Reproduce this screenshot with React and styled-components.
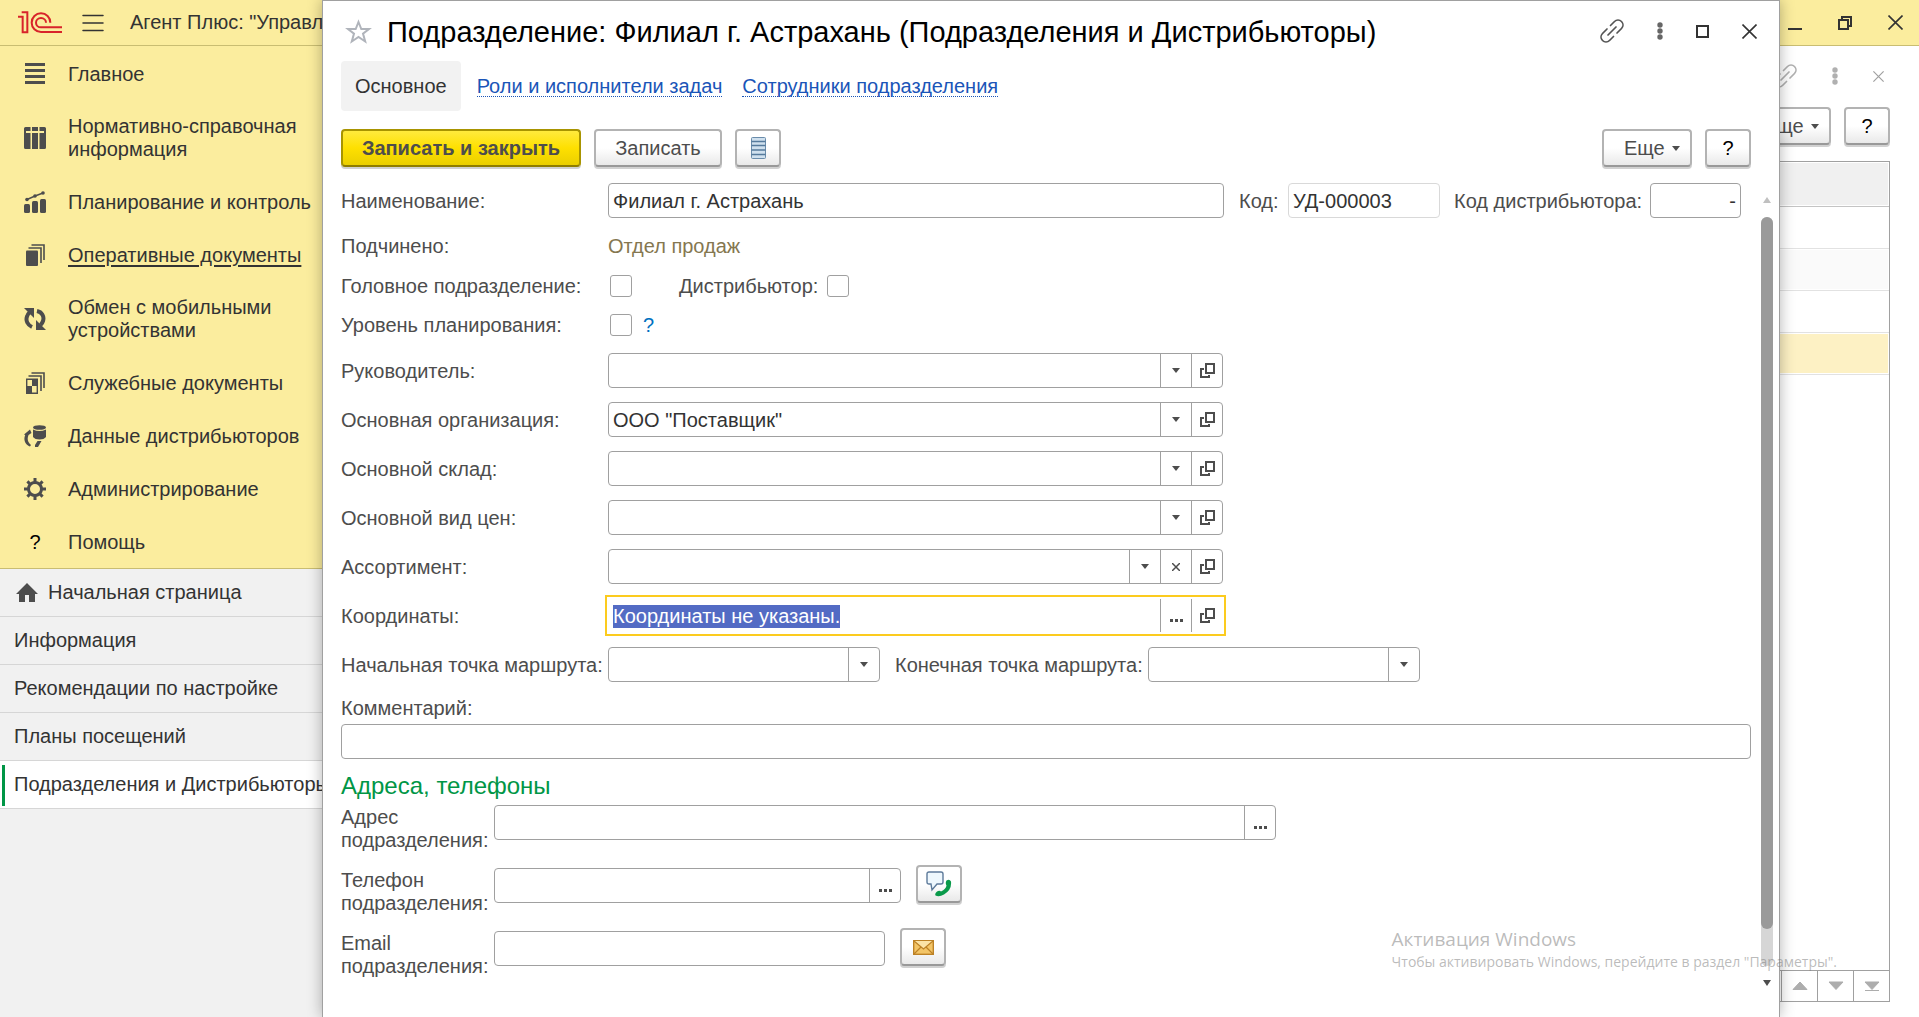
import React, { useEffect, useRef } from "react";
import styled, { createGlobalStyle, css } from "styled-components";

const GlobalStyle = createGlobalStyle`
  * { box-sizing: border-box; }
  html, body { margin: 0; height: 100%; overflow: hidden; background: #fff; }
  body, button, input, select {
    font-family: "Liberation Sans", Arial, sans-serif;
    font-size: 20px;
    line-height: 23px;
    color: #4d4d4d;
  }
  button { padding: 0; cursor: pointer; }
  svg { display: block; flex: none; }
`;

/* ---------- application shell ---------- */

const Shell = styled.div`
  display: flex;
  flex-direction: column;
  height: 100vh;
`;

const AppHeader = styled.header`
  display: flex;
  align-items: center;
  height: 46px;
  flex: none;
  padding: 0 16px 0 18px;
  background: #fbed9e;
  border-bottom: 1px solid #c9bd72;
  color: #333;
`;

const AppTitle = styled.span`
  flex: 1;
  white-space: nowrap;
`;

const PlainButton = styled.button`
  display: flex;
  align-items: center;
  justify-content: center;
  border: 0;
  background: none;
  color: ${(p) => p.$color || "#333"};
`;

const MenuButton = styled(PlainButton)`
  margin: 0 26px 0 20px;
`;

const WindowButtons = styled.div`
  display: flex;
  gap: 36px;
`;

const Workspace = styled.div`
  display: flex;
  flex: 1;
  min-height: 0;
`;

const Sidebar = styled.nav`
  display: flex;
  flex-direction: column;
  width: 340px;
  flex: none;
  background: #f1f1f1;
`;

const Sections = styled.div`
  padding-top: 1px;
  background: #fbed9e;
  border-bottom: 1px solid #c9bd72;
`;

const Section = styled.a`
  display: grid;
  grid-template-columns: 22px 200px;
  align-items: center;
  gap: 22px;
  min-height: 53px;
  padding: 15px 24px 14px;
  color: #333;
  text-decoration: ${(p) => (p.$active ? "underline" : "none")};
  text-underline-offset: 3px;
  white-space: pre;
`;

const HelpMark = styled.span`
  text-align: center;
  color: #000;
`;

const OpenTab = styled.a`
  display: flex;
  align-items: center;
  gap: 10px;
  height: 48px;
  padding-left: ${(p) => (p.$home ? "16px" : "14px")};
  border-bottom: 1px solid #d6d6d6;
  background: ${(p) =>
    p.$active
      ? "linear-gradient(#009646, #009646) 2px 4px / 3px 41px no-repeat #fff"
      : "none"};
  color: #333;
  text-decoration: none;
  white-space: nowrap;
`;

/* ---------- list window behind the dialog ---------- */

const ListWindow = styled.main`
  display: flex;
  flex-direction: column;
  align-items: flex-end;
  flex: 1;
  padding: 18px 29px 15px 20px;
  background: #fff;
`;

const ListTools = styled.div`
  display: flex;
  align-items: center;
  gap: 35px;
  padding-right: 6px;
  margin-bottom: 19px;
`;

const ListCommands = styled.div`
  display: flex;
  gap: 13px;
  margin-bottom: 16px;
`;

const ListFrame = styled.div`
  display: flex;
  flex-direction: column;
  width: 100%;
  flex: 1;
  border: 1px solid #a0a0a0;
`;

const ListTable = styled.table`
  width: 100%;
  border-collapse: collapse;
`;

const HeadCell = styled.th`
  height: 44px;
  padding: 0;
  background: #f0f0f0;
  border-bottom: 1px solid #c4c4c4;
  box-shadow: inset 0 0 0 1px #fff;
`;

const ListCell = styled.td`
  height: 42px;
  padding: 0;
  border-bottom: 1px solid #e2e2e2;
  background: ${(p) =>
    p.$kind === "selected" ? "#fdf1c4" : p.$kind === "even" ? "#fafafa" : "#fff"};
  box-shadow: inset 0 0 0 1px #fff;
`;

const Pager = styled.div`
  display: flex;
  justify-content: flex-end;
  margin-top: auto;
  border-top: 1px solid #a0a0a0;
`;

const PagerButton = styled(PlainButton)`
  width: 36px;
  height: 30px;
  border-left: 1px solid #a0a0a0;
`;

/* ---------- dialog ---------- */

const Dialog = styled.section`
  position: absolute;
  top: 0;
  bottom: 0;
  left: 322px;
  right: 139px;
  display: flex;
  flex-direction: column;
  background: #fff;
  border: 1px solid #a0a0a0;
  border-bottom: 0;
  box-shadow: 0 0 14px rgba(0, 0, 0, 0.3);
`;

const DialogHeader = styled.header`
  display: flex;
  align-items: center;
  gap: 15px;
  height: 60px;
  padding: 0 22px;
`;

const DialogTitle = styled.h1`
  flex: 1;
  margin: 0;
  padding-top: 2px;
  font-size: 29px;
  line-height: 32px;
  font-weight: 400;
  color: #000;
  white-space: nowrap;
`;

const DialogTools = styled.div`
  display: flex;
  align-items: center;
  gap: 33px;
`;

const Tabs = styled.nav`
  display: flex;
  align-items: center;
  padding: 0 28px 0 18px;
`;

const CurrentTab = styled.span`
  padding: 14px 14px 13px;
  margin-right: 16px;
  border-radius: 4px;
  background: #f2f2f2;
  color: #333;
`;

const TabLink = styled.a`
  margin-right: 20px;
  line-height: 20px;
  color: #1a55b8;
  text-decoration: none;
  border-bottom: 1px dotted #1a55b8;
`;

const Commands = styled.div`
  display: flex;
  gap: 13px;
  padding: 18px 28px 16px 18px;
`;

const Spacer = styled.span`
  flex: 1;
`;

const Button = styled.button`
  display: flex;
  align-items: center;
  justify-content: center;
  height: 38px;
  flex: none;
  width: ${(p) => p.$width || "auto"};
  border: 2px solid #b3b3b3;
  border-bottom-color: #999;
  border-radius: 4px;
  background: linear-gradient(#fff 50%, #e9e9e9);
  box-shadow: 0 2px 0 rgba(0, 0, 0, 0.18);
  white-space: nowrap;
  ${(p) =>
    p.$primary &&
    css`
      border-color: #a89400;
      border-bottom-color: #8f7d00;
      background: linear-gradient(#ffea3d, #fee000 50%, #ebcf00);
      font-weight: 700;
    `}
`;

const MoreButton = styled(Button)`
  justify-content: space-between;
  width: 90px;
  padding: 0 10px 0 20px;
`;

const IconButton = styled(Button)`
  width: 46px;
  color: #000;
`;

const DialogBody = styled.div`
  display: flex;
  flex: 1;
  min-height: 0;
  gap: 10px;
  padding: 0 6px 17px 18px;
`;

const Form = styled.form`
  flex: 1;
  min-width: 0;
`;

const Stack = styled.div`
  display: flex;
  flex-direction: column;
  gap: ${(p) => p.$gap};
  padding: ${(p) => p.$padding || 0};
`;

const Row = styled.div`
  display: flex;
  align-items: center;
`;

const CheckRow = styled(Row)`
  height: 22px;
`;

const Label = styled.label`
  flex: none;
  width: ${(p) => p.$width || "auto"};
  padding-top: 1px;
  padding-left: ${(p) => p.$indent || 0};
  white-space: nowrap;
`;

const Reference = styled.span`
  color: #857750;
`;

const FieldBox = styled.div`
  display: flex;
  width: ${(p) => p.$width || "100%"};
  height: 35px;
  flex: none;
  border: 1px solid ${(p) => (p.$focused ? "transparent" : p.$muted ? "#d9d9d9" : "#a0a0a0")};
  border-radius: ${(p) => (p.$focused ? 0 : "4px")};
  background: #fff;
  ${(p) =>
    p.$focused &&
    css`
      outline: 2px solid #fccb1e;
      outline-offset: 1px;
    `}
`;

const controlStyle = css`
  flex: 1;
  min-width: 0;
  padding: 1px 4px 0;
  border: 0;
  outline: 0;
  background: none;
  color: #333;
`;

const Input = styled.input`
  ${controlStyle}
  text-align: ${(p) => (p.$right ? "right" : "left")};
  &::selection {
    background: #536bc4;
    color: #fff;
  }
`;

const Select = styled.select`
  ${controlStyle}
  appearance: none;
`;

const FieldButton = styled(PlainButton)`
  width: 31px;
  border-left: 1px solid #a0a0a0;
`;

const SelectMark = styled.span`
  display: flex;
  align-items: center;
  justify-content: center;
  width: 31px;
  border-left: 1px solid #a0a0a0;
  pointer-events: none;
`;

const Checkbox = styled.input`
  appearance: none;
  width: 22px;
  height: 22px;
  margin: 0 0 0 2px;
  border: 1px solid #a0a0a0;
  border-radius: 3px;
  background: #fff;
`;

const Hint = styled.a`
  margin-left: 11px;
  color: #0070c0;
  text-decoration: none;
`;

const GroupTitle = styled.h2`
  margin: 13px 0 5px;
  font-size: 24px;
  line-height: 28px;
  font-weight: 400;
  color: #009646;
`;

const ContactRow = styled.div`
  display: flex;
  align-items: flex-start;
  height: 46px;
`;

const ContactLabel = styled.label`
  width: 153px;
  flex: none;
  padding-top: 1px;
`;

const ContactField = styled.div`
  display: flex;
  align-items: flex-end;
  gap: 15px;
  margin-top: ${(p) => (p.$withButton ? "-3px" : 0)};
`;

const ScrollBar = styled.div`
  display: flex;
  flex-direction: column;
  align-items: center;
  width: 12px;
`;

const ScrollArrow = styled(PlainButton)`
  height: 34px;
  flex: none;
`;

const ScrollTrack = styled.div`
  flex: 1;
  width: 12px;
  border-radius: 6px;
  background: #d6d6d6;
`;

const ScrollThumb = styled.div`
  height: 95%;
  border-radius: 6px;
  background: #9a9a9a;
`;

const Watermark = styled.aside`
  position: absolute;
  right: 82px;
  bottom: 45px;
  font-family: "Open Sans", "Noto Sans", sans-serif;
  font-size: 14px;
  line-height: 21px;
  color: rgba(120, 120, 120, 0.5);
  pointer-events: none;
  white-space: nowrap;
`;

const WatermarkTitle = styled.div`
  font-size: 19px;
  line-height: 24px;
`;

/* ---------- icons ---------- */

const Logo = () => (
  <svg width="44" height="23" viewBox="54 32 132 69" fill="none" stroke="#d8232a" strokeWidth="6">
    <path d="M54 49H68V96H82V36H65M123 95H186M123 81H186" />
    <path d="M151 67A28 28 0 1 0 123 95" />
    <path d="M138 67A15 14 0 1 0 123 81" />
  </svg>
);

const HamburgerIcon = () => (
  <svg width="22" height="18" viewBox="0 0 22 18" stroke="#333" strokeWidth="1.5" strokeLinecap="round">
    <path d="M1 1.5H21M1 9H21M1 16.5H21" />
  </svg>
);

const Icon22 = ({ children }) => (
  <svg width="22" height="22" viewBox="0 0 22 22" fill="#4d4d4d">
    {children}
  </svg>
);

const MainIcon = () => (
  <Icon22>
    <path d="M1 0h20v3H1zM1 6h20v3H1zM1 12h20v3H1zM1 18h20v3H1z" />
  </Icon22>
);

const CatalogIcon = () => (
  <Icon22>
    <path d="M0 1.5Q0 0 1.500 0H6.500V4H0zM8 0H14V4H8zM15.500 0H20.500Q22 0 22 1.500V4H15.500zM0 6H6.500V22H1.500Q0 22 0 20.500zM8 6H14V22H8zM15.500 6H22V20.500Q22 22 20.500 22H15.500z" />
    <path d="M0 3H2V7H0zM20 3H22V7H20z" />
  </Icon22>
);

const PlanIcon = () => (
  <Icon22>
    <rect x="0" y="13" width="6" height="9" rx="1.500" />
    <rect x="8" y="10" width="6" height="12" rx="1.500" />
    <rect x="16" y="8" width="6" height="14" rx="1.500" />
    <circle cx="3" cy="8.500" r="1.800" />
    <circle cx="11" cy="5" r="1.800" />
    <circle cx="19" cy="2" r="1.800" />
    <path d="M3 8.500L11 5L19 2" fill="none" stroke="#4d4d4d" strokeWidth="1.400" />
  </Icon22>
);

const DocsIcon = () => (
  <Icon22>
    <rect x="2" y="6.500" width="12" height="15.500" rx="1" />
    <path d="M4.500 4H17V19M7.500 1H20V16" fill="none" stroke="#4d4d4d" strokeWidth="1.600" />
  </Icon22>
);

const ServiceDocsIcon = () => (
  <Icon22>
    <path d="M2.700 7.200H13.300V21.300H2.700z" fill="none" stroke="#4d4d4d" strokeWidth="1.400" />
    <path d="M8 7h5.500v7H8zM3 14h5v7.500H3z" />
    <path d="M4.500 4H17V19M7.500 1H20V16" fill="none" stroke="#4d4d4d" strokeWidth="1.600" />
  </Icon22>
);

const SyncIcon = () => (
  <Icon22>
    <path d="M8 19C3.500 17 1.500 12.500 3 8.500Q3.800 6 5.500 4.500" fill="none" stroke="#4d4d4d" strokeWidth="4" />
    <path d="M0 0H10V10z" />
    <path d="M13 3C18 4 20.500 8.500 19 13Q18.200 15.500 16.500 17" fill="none" stroke="#4d4d4d" strokeWidth="4" />
    <path d="M22 22H12V12z" />
  </Icon22>
);

const DistributorIcon = () => (
  <Icon22>
    <ellipse cx="15.500" cy="2.500" rx="6.500" ry="2.300" />
    <path d="M9 4.500Q15.500 7.500 22 4.500V12Q20 14.500 15.500 14.500T9 12z" />
    <path d="M6 21.500C1.500 20 -1 15 1.200 10L0 9.500L6 4.500L7.500 8L4.500 10C3 14 3.500 17 7 20z" />
    <path d="M11 20V22H14L17.500 16H13.500z" />
  </Icon22>
);

const GearIcon = () => (
  <Icon22>
    <circle cx="11" cy="11" r="6.500" fill="none" stroke="#4d4d4d" strokeWidth="3" />
    <path
      d="M11 0V4M11 18V22M0 11H4M18 11H22M3.400 3.400L6 6M16 16L18.600 18.600M18.600 3.400L16 6M6 16L3.400 18.600"
      stroke="#4d4d4d"
      strokeWidth="3"
    />
  </Icon22>
);

const HomeIcon = () => (
  <svg width="22" height="20" viewBox="0 0 22 20" fill="#4d4d4d">
    <path d="M11 0L22 11H19V19H13V12H9V19H3V11H0z" />
  </svg>
);

const StarIcon = () => (
  <svg width="27" height="25" viewBox="0 0 27 25" fill="none" stroke="#b0b4bb" strokeWidth="2">
    <path d="M13.500 3L16.300 10H24L18 14.600L20.200 22.500L13.500 18L6.800 22.500L9 14.600L3 10H10.700z" />
  </svg>
);

const LinkIcon = ({ color = "#555" }) => (
  <svg width="24" height="24" viewBox="0 0 24 24" fill="none" stroke={color} strokeWidth="1.700" strokeLinecap="round">
    <path d="M8 16L16 8" />
    <path d="M10.500 6.500L14.500 2.500A4.800 4.800 0 0 1 21.500 9.500L17 14" />
    <path d="M7 10L2.500 14.500A4.800 4.800 0 0 0 9.500 21.500L13.500 17.500" />
  </svg>
);

const DotsIcon = ({ color = "#666" }) => (
  <svg width="6" height="18" viewBox="0 0 6 18" fill={color}>
    <circle cx="3" cy="3" r="2.700" />
    <circle cx="3" cy="9" r="2.700" />
    <circle cx="3" cy="15" r="2.700" />
  </svg>
);

const MaximizeIcon = () => (
  <svg width="13" height="13" viewBox="0 0 13 13" fill="none" stroke="#333" strokeWidth="2">
    <path d="M1 1H12V12H1z" />
  </svg>
);

const CloseIcon = ({ size = 15, color = "#333" }) => (
  <svg width={size} height={size} viewBox="0 0 15 15" stroke={color} strokeWidth="1.600">
    <path d="M0.500 0.500L14.500 14.500M14.500 0.500L0.500 14.500" />
  </svg>
);

const MinimizeIcon = () => (
  <svg width="14" height="15" viewBox="0 0 14 15" fill="#333">
    <path d="M0 13h14v2H0z" />
  </svg>
);

const RestoreIcon = () => (
  <svg width="14" height="14" viewBox="0 0 14 14" fill="none" stroke="#333" strokeWidth="2">
    <path d="M1 4H10V13H1zM4 4V1H13V10H10" />
  </svg>
);

const CaretIcon = () => (
  <svg width="8" height="5" viewBox="0 0 8 5" fill="#4d4d4d">
    <path d="M0 0H8L4 5z" />
  </svg>
);

const OpenIcon = () => (
  <svg width="15" height="15" viewBox="0 0 15 15" fill="none" stroke="#4d4d4d" strokeWidth="2">
    <path d="M6 1H14V10H6zM4 6H1V14H9V12" />
  </svg>
);

const ClearIcon = () => (
  <svg width="8" height="8" viewBox="0 0 8 8" stroke="#4d4d4d" strokeWidth="1.500">
    <path d="M0 0L8 8M8 0L0 8" />
  </svg>
);

const EllipsisIcon = () => (
  <svg width="13" height="13" viewBox="0 0 13 13" fill="#4d4d4d">
    <path d="M0 10h3v3H0zM5 10h3v3H5zM10 10h3v3h-3z" />
  </svg>
);

const ListIcon = () => (
  <svg width="15" height="22" viewBox="0 0 15 22">
    <rect x="0.500" y="0.500" width="14" height="21" rx="1" fill="#cfe0ee" stroke="#6a8cab" />
    <path d="M0.500 4.500H14.500M0.500 8.500H14.500M0.500 13H14.500M0.500 17.500H14.500" stroke="#557a9c" strokeWidth="1.600" />
  </svg>
);

const CallIcon = () => (
  <svg width="26" height="26" viewBox="0 0 26 26">
    <path d="M3 1H15Q17 1 17 3V11Q17 13 15 13H11L6 19L5 13H3Q1 13 1 11V3Q1 1 3 1z" fill="#eef7fd" stroke="#5d7a9a" strokeWidth="1.400" />
    <path d="M20.500 9.500Q23.500 7.500 25 10.500Q26 19 18 23.500Q13 26.500 9.500 24.500Q8.500 22.500 11 20.500Q13.500 19 15 20.500Q20 18 20.500 14.500Q19 12 20.500 9.500z" fill="#0a9a4a" />
  </svg>
);

const MailIcon = () => (
  <svg width="21" height="15" viewBox="0 0 21 15">
    <rect x="0.700" y="0.700" width="19.600" height="13.600" fill="#f3c567" stroke="#bd8226" strokeWidth="1.400" />
    <path d="M1 1H20L10.500 9z" fill="#fbe3a6" />
    <path d="M1 1L10.500 9L20 1M1 14L8 7M20 14L13 7" fill="none" stroke="#bd8226" strokeWidth="1.200" />
  </svg>
);

const TriangleUp = () => (
  <svg width="8" height="6" viewBox="0 0 8 6" fill="#c0c0c0">
    <path d="M4 0L8 6H0z" />
  </svg>
);

const TriangleDown = () => (
  <svg width="8" height="6" viewBox="0 0 8 6" fill="#4d4d4d">
    <path d="M0 0H8L4 6z" />
  </svg>
);

const PagerIcon = ({ kind }) => (
  <svg width="16" height="10" viewBox="0 0 16 10" fill="#adadad" stroke="#adadad">
    {kind === "up" ? <path d="M8 1L15 8.500H1z" /> : <path d="M1 1H15L8 8.500z" />}
    {kind === "last" && <path d="M1 9.500H15" />}
  </svg>
);

/* ---------- data ---------- */

const sections = [
  { text: "Главное", icon: <MainIcon /> },
  { text: "Нормативно-справочная\nинформация", icon: <CatalogIcon /> },
  { text: "Планирование и контроль", icon: <PlanIcon /> },
  { text: "Оперативные документы", icon: <DocsIcon />, active: true },
  { text: "Обмен с мобильными\nустройствами", icon: <SyncIcon /> },
  { text: "Служебные документы", icon: <ServiceDocsIcon /> },
  { text: "Данные дистрибьюторов", icon: <DistributorIcon /> },
  { text: "Администрирование", icon: <GearIcon /> },
  { text: "Помощь", icon: <HelpMark>?</HelpMark> },
];

const openTabs = ["Информация", "Рекомендации по настройке", "Планы посещений"];

const references = [
  { id: "manager", label: "Руководитель:", value: "", buttons: ["pick", "open"] },
  { id: "organization", label: "Основная организация:", value: 'ООО "Поставщик"', buttons: ["pick", "open"] },
  { id: "warehouse", label: "Основной склад:", value: "", buttons: ["pick", "open"] },
  { id: "price", label: "Основной вид цен:", value: "", buttons: ["pick", "open"] },
  { id: "assortment", label: "Ассортимент:", value: "", buttons: ["pick", "clear", "open"] },
];

const fieldIcons = {
  pick: { icon: <CaretIcon />, title: "Выбрать из списка" },
  clear: { icon: <ClearIcon />, title: "Очистить" },
  open: { icon: <OpenIcon />, title: "Открыть" },
  more: { icon: <EllipsisIcon />, title: "Выбрать" },
};

const Field = ({ id, value = "", width, buttons = [], muted, focused, right, inputRef }) => (
  <FieldBox $width={width} $muted={muted} $focused={focused}>
    <Input id={id} defaultValue={value} readOnly={muted} $right={right} ref={inputRef} />
    {buttons.map((b) => (
      <FieldButton key={b} type="button" aria-label={fieldIcons[b].title}>
        {fieldIcons[b].icon}
      </FieldButton>
    ))}
  </FieldBox>
);

const RouteSelect = ({ id }) => (
  <FieldBox $width="272px">
    <Select id={id} defaultValue="">
      <option value="" />
    </Select>
    <SelectMark>
      <CaretIcon />
    </SelectMark>
  </FieldBox>
);

export default function App() {
  const coordinates = useRef(null);

  useEffect(() => {
    coordinates.current.focus();
    coordinates.current.select();
  }, []);

  return (
    <>
      <GlobalStyle />
      <Shell>
        <AppHeader>
          <Logo />
          <MenuButton aria-label="Меню">
            <HamburgerIcon />
          </MenuButton>
          <AppTitle>Агент Плюс: "Управление</AppTitle>
          <WindowButtons>
            <PlainButton aria-label="Свернуть"><MinimizeIcon /></PlainButton>
            <PlainButton aria-label="Восстановить"><RestoreIcon /></PlainButton>
            <PlainButton aria-label="Закрыть программу"><CloseIcon /></PlainButton>
          </WindowButtons>
        </AppHeader>
        <Workspace>
          <Sidebar>
            <Sections>
              {sections.map((s) => (
                <Section key={s.text} href="#" $active={s.active}>
                  {s.icon}
                  <span>{s.text}</span>
                </Section>
              ))}
            </Sections>
            <OpenTab href="#" $home>
              <HomeIcon />
              Начальная страница
            </OpenTab>
            {openTabs.map((t) => (
              <OpenTab key={t} href="#">{t}</OpenTab>
            ))}
            <OpenTab href="#" $active>Подразделения и Дистрибьюторы</OpenTab>
          </Sidebar>
          <ListWindow>
            <ListTools>
              <PlainButton aria-label="Ссылка на список"><LinkIcon color="#b0b0b0" /></PlainButton>
              <PlainButton aria-label="Действия списка"><DotsIcon color="#b0b0b0" /></PlainButton>
              <PlainButton aria-label="Закрыть список"><CloseIcon size={11} color="#a0a0a0" /></PlainButton>
            </ListTools>
            <ListCommands>
              <MoreButton>Еще <CaretIcon /></MoreButton>
              <IconButton>?</IconButton>
            </ListCommands>
            <ListFrame>
              <ListTable>
                <thead>
                  <tr><HeadCell /></tr>
                </thead>
                <tbody>
                  {["odd", "even", "odd", "selected"].map((kind, i) => (
                    <tr key={i}><ListCell $kind={kind} /></tr>
                  ))}
                </tbody>
              </ListTable>
              <Pager>
                <PagerButton aria-label="Назад"><PagerIcon kind="up" /></PagerButton>
                <PagerButton aria-label="Вперед"><PagerIcon kind="down" /></PagerButton>
                <PagerButton aria-label="В конец"><PagerIcon kind="last" /></PagerButton>
              </Pager>
            </ListFrame>
          </ListWindow>
        </Workspace>
      </Shell>

      <Dialog>
        <DialogHeader>
          <PlainButton aria-label="В избранное"><StarIcon /></PlainButton>
          <DialogTitle>Подразделение: Филиал г. Астрахань (Подразделения и Дистрибьюторы)</DialogTitle>
          <DialogTools>
            <PlainButton aria-label="Получить ссылку"><LinkIcon /></PlainButton>
            <PlainButton aria-label="Действия"><DotsIcon /></PlainButton>
            <PlainButton aria-label="Развернуть"><MaximizeIcon /></PlainButton>
            <PlainButton aria-label="Закрыть"><CloseIcon /></PlainButton>
          </DialogTools>
        </DialogHeader>
        <Tabs>
          <CurrentTab>Основное</CurrentTab>
          <TabLink href="#">Роли и исполнители задач</TabLink>
          <TabLink href="#">Сотрудники подразделения</TabLink>
        </Tabs>
        <Commands>
          <Button $primary $width="240px">Записать и закрыть</Button>
          <Button $width="128px">Записать</Button>
          <IconButton aria-label="Список"><ListIcon /></IconButton>
          <Spacer />
          <MoreButton>Еще <CaretIcon /></MoreButton>
          <IconButton>?</IconButton>
        </Commands>
        <DialogBody>
          <Form>
            <Row>
              <Label htmlFor="name" $width="267px">Наименование:</Label>
              <Field id="name" width="616px" value="Филиал г. Астрахань" />
              <Label htmlFor="code" $width="64px" $indent="15px">Код:</Label>
              <Field id="code" width="152px" value="УД-000003" muted />
              <Label htmlFor="dealer-code" $width="210px" $indent="14px">Код дистрибьютора:</Label>
              <Field id="dealer-code" width="91px" value="-" right />
            </Row>
            <Stack $gap="17px" $padding="16px 0 17px">
              <Row>
                <Label as="span" $width="267px">Подчинено:</Label>
                <Reference>Отдел продаж</Reference>
              </Row>
              <CheckRow>
                <Label htmlFor="head" $width="267px">Головное подразделение:</Label>
                <Checkbox id="head" type="checkbox" />
                <Label htmlFor="dealer" $width="193px" $indent="47px">Дистрибьютор:</Label>
                <Checkbox id="dealer" type="checkbox" />
              </CheckRow>
              <CheckRow>
                <Label htmlFor="level" $width="267px">Уровень планирования:</Label>
                <Checkbox id="level" type="checkbox" />
                <Hint href="#">?</Hint>
              </CheckRow>
            </Stack>
            <Stack $gap="14px">
              {references.map((r) => (
                <Row key={r.id}>
                  <Label htmlFor={r.id} $width="267px">{r.label}</Label>
                  <Field id={r.id} width="615px" value={r.value} buttons={r.buttons} />
                </Row>
              ))}
              <Row>
                <Label htmlFor="coordinates" $width="267px">Координаты:</Label>
                <Field
                  id="coordinates"
                  width="615px"
                  value="Координаты не указаны."
                  buttons={["more", "open"]}
                  focused
                  inputRef={coordinates}
                />
              </Row>
              <Row>
                <Label htmlFor="route-start" $width="267px">Начальная точка маршрута:</Label>
                <RouteSelect id="route-start" />
                <Label htmlFor="route-end" $width="268px" $indent="15px">Конечная точка маршрута:</Label>
                <RouteSelect id="route-end" />
              </Row>
              <Stack $gap="4px">
                <Label htmlFor="comment">Комментарий:</Label>
                <Field id="comment" />
              </Stack>
            </Stack>
            <GroupTitle>Адреса, телефоны</GroupTitle>
            <Stack $gap="17px">
              <ContactRow>
                <ContactLabel htmlFor="address">Адрес подразделения:</ContactLabel>
                <ContactField>
                  <Field id="address" width="782px" buttons={["more"]} />
                </ContactField>
              </ContactRow>
              <ContactRow>
                <ContactLabel htmlFor="phone">Телефон подразделения:</ContactLabel>
                <ContactField $withButton>
                  <Field id="phone" width="407px" buttons={["more"]} />
                  <IconButton type="button" aria-label="Позвонить"><CallIcon /></IconButton>
                </ContactField>
              </ContactRow>
              <ContactRow>
                <ContactLabel htmlFor="email">Email подразделения:</ContactLabel>
                <ContactField $withButton>
                  <Field id="email" width="391px" />
                  <IconButton type="button" aria-label="Написать письмо"><MailIcon /></IconButton>
                </ContactField>
              </ContactRow>
            </Stack>
          </Form>
          <ScrollBar>
            <ScrollArrow aria-label="Прокрутить вверх"><TriangleUp /></ScrollArrow>
            <ScrollTrack><ScrollThumb /></ScrollTrack>
            <ScrollArrow aria-label="Прокрутить вниз"><TriangleDown /></ScrollArrow>
          </ScrollBar>
        </DialogBody>
      </Dialog>

      <Watermark>
        <WatermarkTitle>Активация Windows</WatermarkTitle>
        Чтобы активировать Windows, перейдите в раздел "Параметры".
      </Watermark>
    </>
  );
}
